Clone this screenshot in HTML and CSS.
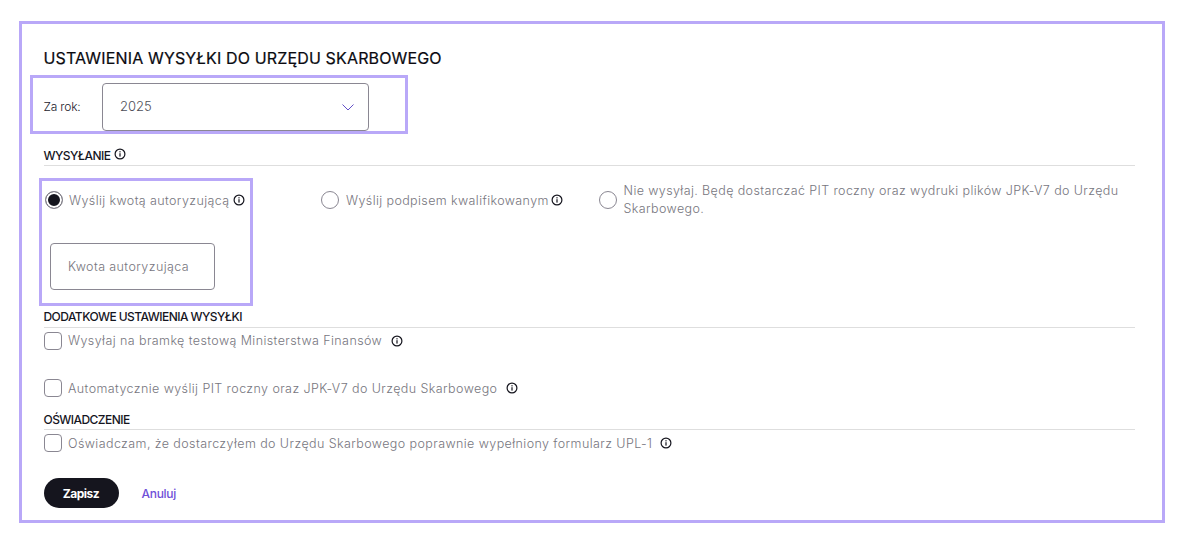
FILE: index.html
```html
<!DOCTYPE html>
<html lang="pl">
<head>
    <meta charset="UTF-8">
    <meta name="viewport" content="width=device-width, initial-scale=1.0">
    <title>Ustawienia wysyłki</title>
    <link rel="stylesheet" href="styles.css">
</head>
<body>
    <svg class="icon-defs" width="0" height="0">
        <symbol id="info" viewBox="0 0 12 12">
            <circle cx="6" cy="6" r="4.9" fill="none" stroke="currentColor" stroke-width="1.2"/>
            <rect x="5.4" y="5.2" width="1.2" height="3.4" fill="currentColor"/>
            <rect x="5.4" y="3.2" width="1.2" height="1.2" fill="currentColor"/>
        </symbol>
    </svg>
    <div class="settings-frame">
        <h1 class="page-title">USTAWIENIA WYSYŁKI DO URZĘDU SKARBOWEGO</h1>
        <div class="year-row">
            <span class="year-label">Za rok:</span>
            <div class="year-select">
                <span class="year-value">2025</span>
                <svg class="chevron" viewBox="0 0 12 7" width="12" height="7">
                    <path d="M0.5 0.5 L6 6 L11.5 0.5" fill="none" stroke="#6350c8" stroke-width="1"/>
                </svg>
            </div>
        </div>

        <div class="section-head section-send">
            <span>WYSYŁANIE</span>
            <svg class="info info-head"><use href="#info"/></svg>
        </div>
        <div class="send-options">
            <div class="option-highlight">
                <div class="option">
                    <span class="radio radio-checked"></span>
                    <span class="option-text">Wyślij kwotą autoryzującą</span>
                    <svg class="info"><use href="#info"/></svg>
                </div>
                <div class="amount-input">Kwota autoryzująca</div>
            </div>
            <div class="option option-signed">
                <span class="radio"></span>
                <span class="option-text">Wyślij podpisem kwalifikowanym</span>
                <svg class="info"><use href="#info"/></svg>
            </div>
            <div class="option option-none">
                <span class="radio"></span>
                <span class="option-text">Nie wysyłaj. Będę dostarczać PIT roczny oraz wydruki plików JPK-V7 do Urzędu Skarbowego.</span>
            </div>
        </div>

        <div class="section-head section-extra">
            <span>DODATKOWE USTAWIENIA WYSYŁKI</span>
        </div>
        <div class="check-row check-test">
            <span class="checkbox"></span>
            <span class="option-text">Wysyłaj na bramkę testową Ministerstwa Finansów</span>
            <svg class="info info-far"><use href="#info"/></svg>
        </div>
        <div class="check-row check-auto">
            <span class="checkbox"></span>
            <span class="option-text">Automatycznie wyślij PIT roczny oraz JPK-V7 do Urzędu Skarbowego</span>
            <svg class="info info-far"><use href="#info"/></svg>
        </div>

        <div class="section-head section-statement">
            <span>OŚWIADCZENIE</span>
        </div>
        <div class="check-row">
            <span class="checkbox"></span>
            <span class="option-text">Oświadczam, że dostarczyłem do Urzędu Skarbowego poprawnie wypełniony formularz UPL-1</span>
            <svg class="info"><use href="#info"/></svg>
        </div>

        <div class="actions">
            <button class="btn-save">Zapisz</button>
            <a class="btn-cancel" href="#">Anuluj</a>
        </div>
    </div>
</body>
</html>
```

FILE: styles.css
```css
* {
    box-sizing: border-box;
}
body {
    font-family: 'Inter', 'Liberation Sans', sans-serif;
    margin: 0;
    background: #fff;
    color: #15151e;
}
.icon-defs {
    display: block;
    height: 0;
}
.settings-frame {
    width: 1146px;
    height: 502px;
    margin: 21px 0 0 19px;
    padding: 24px 27px 0 21.5px;
    border: 3px solid #b9a8f8;
}
.page-title {
    margin: 0;
    font-size: 16px;
    line-height: 20px;
    font-weight: 400;
    letter-spacing: 0.15px;
    color: #0a0a10;
    -webkit-text-stroke: 0.2px #0a0a10;
}
.year-row {
    display: flex;
    align-items: center;
    width: 378px;
    height: 59px;
    margin: 7px 0 0 -13.5px;
    padding: 5px 0 0 10.5px;
    border: 3px solid #b9a8f8;
}
.year-label {
    width: 58.5px;
    margin-top: -2px;
    font-size: 12px;
    font-weight: 300;
    letter-spacing: -0.2px;
    color: #22222c;
}
.year-select {
    display: flex;
    align-items: center;
    justify-content: space-between;
    width: 267px;
    height: 48px;
    padding: 0 14px 0 17px;
    border: 1px solid #8a8792;
    border-radius: 4px;
    font-size: 13px;
    font-weight: 300;
    color: #4e4e58;
    background: #fff;
}
.year-value {
    margin-top: -2px;
}
.section-head {
    display: flex;
    align-items: center;
    height: 21px;
    font-size: 12px;
    font-weight: 500;
    letter-spacing: -0.55px;
    color: #15151e;
    border-bottom: 1px solid #dedede;
}
.section-send {
    margin-top: 11px;
}
.info {
    width: 12px;
    height: 12px;
    flex: none;
    color: #15151e;
    margin-left: 3px;
}
.info-head {
    margin-left: 4px;
    margin-top: -3px;
}
.send-options {
    display: flex;
    align-items: flex-start;
    margin-top: 12px;
    height: 127px;
}
.option-highlight {
    width: 214px;
    height: 128px;
    margin-left: -4.5px;
    padding: 10px 0 0 2.5px;
    border: 3px solid #b9a8f8;
}
.option {
    display: flex;
    align-items: center;
    font-size: 12.5px;
}
.option-text {
    color: #77767e;
    font-size: 12.5px;
    font-weight: 300;
    letter-spacing: 0.39px;
}
.option .option-text {
    margin-left: 6.5px;
}
.radio {
    width: 18px;
    height: 18px;
    flex: none;
    border: 1px solid #8a8792;
    border-radius: 50%;
    background: #fff;
}
.radio-checked {
    background: #15151e;
    box-shadow: inset 0 0 0 2px #fff;
}
.amount-input {
    width: 165px;
    height: 47px;
    margin: 34px 0 0 5.5px;
    padding: 0 0 0 17px;
    border: 1px solid #8a8792;
    border-radius: 4px;
    font-size: 12.5px;
    font-weight: 300;
    line-height: 45px;
    color: #77767e;
    letter-spacing: 0.41px;
}
.option-signed {
    width: 278px;
    margin: 13px 0 0 68px;
}
.option-signed .option-text {
    margin-left: 7px;
    white-space: nowrap;
}
.check-row .option-text {
    letter-spacing: 0.41px;
    white-space: nowrap;
}
.option-signed .info {
    margin-left: 2px;
}
.option-none {
    flex: 1;
    margin-top: 4px;
    padding-right: 10px;
}
.option-none .option-text {
    line-height: 18px;
}
.section-extra {
    height: 23px;
}
.check-row {
    display: flex;
    align-items: center;
    gap: 6.5px;
    height: 26px;
}
.check-row .info {
    margin-left: 1px;
}
.check-row .info-far {
    margin-left: 2px;
}
.check-test {
    height: 25px;
}
.check-auto {
    margin-top: 22px;
}
.checkbox {
    width: 18px;
    height: 18px;
    flex: none;
    border: 1px solid #8a8792;
    border-radius: 4px;
    background: #fff;
}
.section-statement {
    margin-top: 8px;
}
.actions {
    display: flex;
    align-items: center;
    gap: 23px;
    margin-top: 22px;
}
.btn-save {
    width: 75px;
    height: 30px;
    padding: 0;
    border: none;
    border-radius: 15px;
    background: #15151e;
    color: #fff;
    font-family: inherit;
    font-size: 12px;
    font-weight: 700;
    letter-spacing: -0.5px;
}
.btn-cancel {
    font-size: 12px;
    font-weight: 500;
    letter-spacing: -0.3px;
    color: #6f4fd8;
    text-decoration: none;
}
```
